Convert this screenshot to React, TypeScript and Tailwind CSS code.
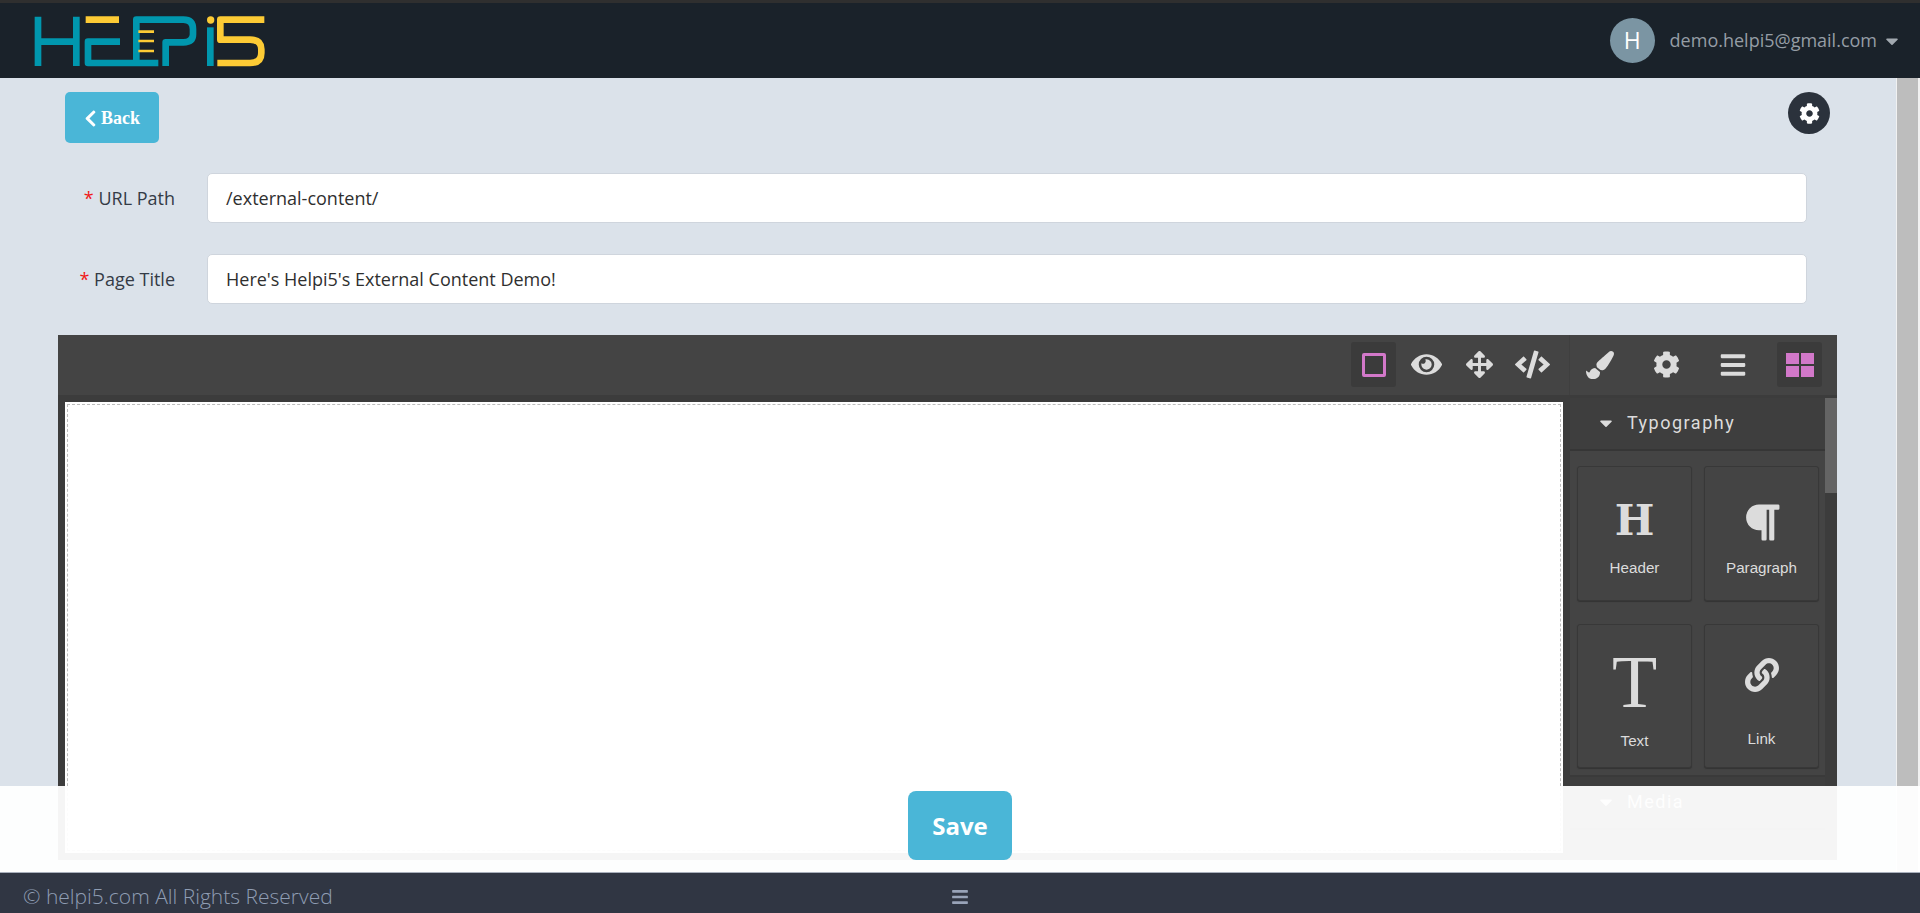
import { FaArrowsAlt, FaBars, FaCaretDown, FaChevronLeft, FaCode, FaCog, FaEye, FaLink, FaParagraph, FaPaintBrush } from "react-icons/fa"

function Logo() {
  return (
    <svg width="260" height="70" viewBox="0 0 780 210" fill="none" className="block">
      <g stroke="#0097ae" strokeWidth="20" strokeLinejoin="round">
        {/* H */}
        <path d="M54 32V180M169 32V180M54 107H169" />
        {/* E */}
        <path d="M300 107H204V171H415" />
        {/* L + P */}
        <path d="M349 171V41H490Q519 41 519 70V85Q519 109 490 109H437V180" />
        {/* i */}
        <path d="M571 64V180" />
      </g>
      <g stroke="#fdcb35">
        <path d="M197 41H297" strokeWidth="20" />
        <path d="M355 77H402M355 105H402M355 135H402" strokeWidth="8" />
        <path d="M733 41H601V101H690Q724 101 724 130V141Q724 171 690 171H592" strokeWidth="20" strokeLinejoin="round" />
      </g>
      <circle cx="572" cy="42" r="11" fill="#fdcb35" />
    </svg>
  )
}

function ToolButton({ active, children }: { active?: boolean; children: React.ReactNode }) {
  return (
    <div className={"w-[45px] h-[45px] flex items-center justify-center rounded-[3px] text-[#dcdcdc] " + (active ? "bg-[#3b3b3b]" : "")}>
      {children}
    </div>
  )
}

function Block({ label, children, iconClass, labelClass }: { label: string; children: React.ReactNode; iconClass: string; labelClass: string }) {
  return (
    <div className="w-[115px] flex flex-col items-center rounded-[3px] bg-[#444444] border border-[#383838] shadow-[0_1px_1px_rgba(0,0,0,0.25)] text-[#dcdcdc]">
      <div className={"flex items-end justify-center " + iconClass}>{children}</div>
      <div className={"text-[15.2px] leading-[18px] font-['Liberation_Sans',sans-serif] " + labelClass}>{label}</div>
    </div>
  )
}

function FormRow({ label, value, className }: { label: string; value: string; className: string }) {
  return (
    <div className={"flex items-center " + className}>
      <div className="w-[117px] text-right text-[18px] font-medium text-[#343b46] whitespace-nowrap">
        <span className="text-[#f01818]">*</span> {label}
      </div>
      <div className="ml-[32px] flex-1 h-[50px] flex items-center px-[18px] rounded-[5px] bg-white border border-[#cfd5dd] text-[18px] text-[#2f2f2f]">
        {value}
      </div>
    </div>
  )
}

function SectionHeader({ label }: { label: string }) {
  return (
    <div className="h-[53px] shrink-0 flex items-center pl-[26px] pb-[2px] bg-[#3e3e3e] border-b-2 border-[#363636] text-[#dcdcdc]">
      <FaCaretDown className="w-[20px] h-[20px]" />
      <span className="ml-[11px] text-[18px] tracking-[1.5px] font-['Roboto',sans-serif]">{label}</span>
    </div>
  )
}

export default function App() {
  return (
    <div className="relative h-[913px] overflow-hidden flex flex-col bg-[#dbe2ea] font-['Open_Sans',sans-serif]">
      {/* Header */}
      <header className="h-[78px] shrink-0 flex items-center justify-between border-t-[3px] border-[#2f2f2f] bg-[#1a222a]">
        <div className="ml-[20px]">
          <Logo />
        </div>
        <div className="flex items-center mr-[18px]">
          <div className="w-[45px] h-[45px] rounded-full bg-[#7b95a3] flex items-center justify-center text-[23px] text-white">H</div>
          <span className="ml-[15px] text-[18px] text-[#959da5]">demo.helpi5@gmail.com</span>
          <FaCaretDown className="ml-[5px] text-[#a2a9b0] w-[20px] h-[20px]" />
        </div>
      </header>

      {/* Content + page scrollbar */}
      <div className="flex-1 min-h-0 flex">
        <main className="w-[1896px] pl-[58px] pr-[59px] pt-[14px] overflow-hidden">
          <div className="flex items-start justify-between px-[7px]">
            <button className="w-[94px] h-[51px] pt-[2px] rounded-[5px] bg-[#4ab6d7] text-white flex items-center justify-center gap-[4px] font-['Liberation_Serif',serif] font-bold text-[18px]">
              <FaChevronLeft className="w-[13px] h-[19px]" />
              Back
            </button>
            <div className="w-[42px] h-[42px] rounded-full bg-[#2b323c] flex items-center justify-center text-white">
              <FaCog className="w-[21px] h-[21px]" />
            </div>
          </div>

          <div className="pr-[30px]">
            <FormRow label="URL Path" value="/external-content/" className="mt-[30px]" />
            <FormRow label="Page Title" value="Here's Helpi5's External Content Demo!" className="mt-[31px]" />
          </div>

          {/* Page builder */}
          <div className="mt-[31px] h-[525px] bg-[#3c3c3c] flex flex-col overflow-hidden">
            <div className="h-[60px] shrink-0 bg-[#444444] flex">
              <div className="flex-1 flex items-center justify-end gap-[8px] pr-[14px] pb-px">
                <ToolButton active>
                  <div className="w-[24px] h-[24px] border-[3px] border-[#d278c9] rounded-[2px]" />
                </ToolButton>
                <ToolButton>
                  <FaEye className="w-[31px] h-[31px]" />
                </ToolButton>
                <ToolButton>
                  <FaArrowsAlt className="w-[27px] h-[27px]" />
                </ToolButton>
                <ToolButton>
                  <FaCode className="w-[35px] h-[35px]" />
                </ToolButton>
              </div>
              <div className="w-[268px] flex items-center justify-end gap-[21.5px] pr-[15px] pb-px border-l border-[#3f3f3f]">
                <ToolButton>
                  <FaPaintBrush className="w-[28px] h-[28px]" />
                </ToolButton>
                <ToolButton>
                  <FaCog className="w-[27px] h-[27px]" />
                </ToolButton>
                <ToolButton>
                  <FaBars className="w-[26px] h-[28px]" />
                </ToolButton>
                <ToolButton active>
                  <div className="w-[28px] h-[24px] grid grid-cols-2 gap-[2px]">
                    <div className="bg-[#d278c9]" />
                    <div className="bg-[#d278c9]" />
                    <div className="bg-[#d278c9]" />
                    <div className="bg-[#d278c9]" />
                  </div>
                </ToolButton>
              </div>
            </div>

            <div className="flex-1 min-h-0 flex pt-[3px]">
              {/* Canvas */}
              <div className="w-[1512px] shrink-0 pl-[7px] pt-[4px] pr-[7px] pb-[7px] flex">
                <div className="flex-1 bg-white p-[2px]">
                  <div className="h-full border border-dashed border-[#bdbdbd]" />
                </div>
              </div>

              {/* Block manager */}
              <div className="w-[255px] shrink-0 overflow-hidden flex flex-col">
                <SectionHeader label="Typography" />
                <div className="h-[326px] shrink-0 bg-[#444444] border-b-2 border-[#3a3a3a] pl-[7px] pr-[6px] pt-[15px]">
                  <div className="flex justify-between">
                    <Block label="Header" iconClass="h-[71px]" labelClass="mt-[21px] pb-[23px]">
                      <span className="text-[42px] leading-[42px] -mb-[4px] font-bold font-['DejaVu_Serif',serif]">H</span>
                    </Block>
                    <Block label="Paragraph" iconClass="h-[71px]" labelClass="mt-[21px] pb-[23px]">
                      <FaParagraph className="w-[37px] h-[41px] -mb-[5px]" />
                    </Block>
                  </div>
                  <div className="flex justify-between mt-[23px]">
                    <Block label="Text" iconClass="h-[94px]" labelClass="mt-[13px] pb-[17px]">
                      <span className="text-[74px] leading-[74px] font-['Liberation_Serif',serif]">T</span>
                    </Block>
                    <Block label="Link" iconClass="h-[67px]" labelClass="mt-[38px] pb-[19px]">
                      <FaLink className="w-[34px] h-[34px]" />
                    </Block>
                  </div>
                </div>
                <SectionHeader label="Media" />
              </div>

              {/* Panel scrollbar */}
              <div className="w-[12px] shrink-0 bg-[#3c3c3c]">
                <div className="h-[95px] bg-[#646464]" />
              </div>
            </div>
          </div>
        </main>
        <div className="flex-1 bg-[#f1f1f1] pl-px pr-[2px]">
          <div className="h-full bg-[#bdbdbd]" />
        </div>
      </div>

      {/* Footer */}
      <footer className="h-[41px] shrink-0 flex items-center relative bg-[#303643] border-t border-[#a9b0bc] pl-[23px] text-[#8f9db3]">
        <span className="text-[21px] font-light leading-none pt-[6px]">© helpi5.com All Rights Reserved</span>
        <FaBars className="absolute left-[950px] top-[15px] w-[20px] h-[18px] text-[#98a3b8]" />
      </footer>

      {/* Sticky save bar */}
      <div className="absolute left-0 right-0 bottom-[41px] h-[86px] bg-white/95 flex justify-center pt-[5px]">
        <button className="w-[104px] h-[69px] rounded-[8px] bg-[#4ab6d7] text-white text-[24px] font-bold">Save</button>
      </div>
    </div>
  )
}
